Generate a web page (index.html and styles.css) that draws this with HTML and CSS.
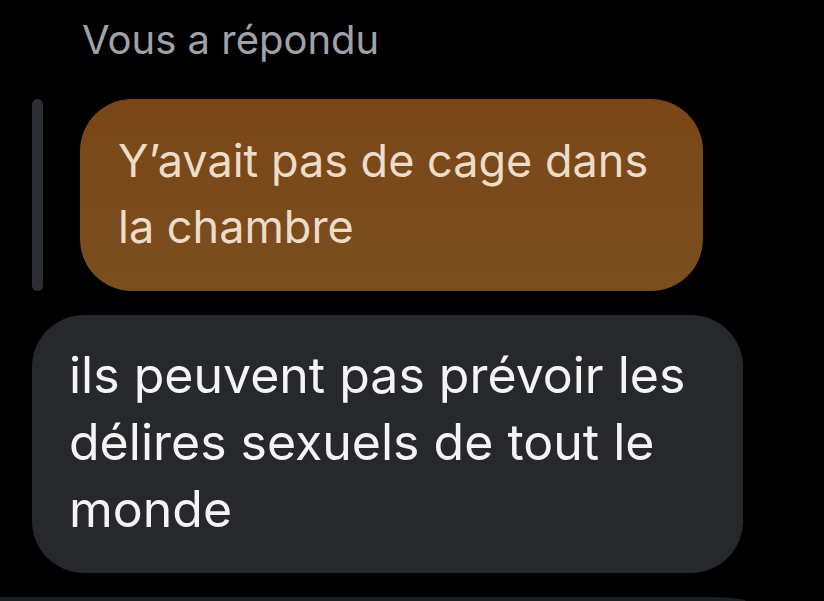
FILE: index.html
```
<!DOCTYPE html>
<html lang="fr">
<head>
    <meta charset="UTF-8">
    <meta name="viewport" content="width=device-width, initial-scale=1.0">
    <title>Messages</title>
    <link rel="stylesheet" href="styles.css">
</head>
<body>

    <div class="thread">
        <div class="reply-label">Vous a répondu</div>

        <div class="reply">
            <div class="reply-bar"></div>
            <div class="bubble quoted">Y’avait pas de cage dans la chambre</div>
        </div>

        <div class="bubble incoming">ils peuvent pas prévoir les délires sexuels de tout le monde</div>

        <!-- top edge of the next message -->
        <div class="next-bubble"></div>
    </div>

</body>
</html>
```

FILE: styles.css
```
body {
    font-family: Inter, 'Liberation Sans', Arial, sans-serif;
    background-color: #000;
    margin: 0;
    height: 100vh;
    overflow: hidden;
}
.thread {
    display: flex;
    flex-direction: column;
    align-items: flex-start;
}
.reply-label {
    color: #a0a2a8;
    font-size: 40px;
    line-height: 46px;
    padding: 17px 0 0 82px;
}
.reply {
    display: flex;
    gap: 37px;
    margin: 36px 0 0 32px;
}
.reply-bar {
    width: 11px;
    background-color: #2b2e33;
    border-radius: 6px;
}
.bubble {
    box-sizing: border-box;
    border-radius: 52px;
}
.quoted {
    width: 623px;
    height: 192px;
    padding: 29px 40px 0 38px;
    font-size: 45px;
    line-height: 66px;
    color: #ecdcc8;
    background: linear-gradient(#7a4618, #7b4e1e);
}
.incoming {
    width: 711px;
    height: 258px;
    margin: 24px 0 0 32px;
    padding: 27px 36px 0 37px;
    font-size: 50px;
    line-height: 67px;
    color: #f4f4f5;
    background-color: #26282c;
}
.next-bubble {
    width: 746px;
    height: 4px;
    margin-top: 24px;
    background-color: #1e1f21;
    border-top-right-radius: 44px 4px;
}
```
